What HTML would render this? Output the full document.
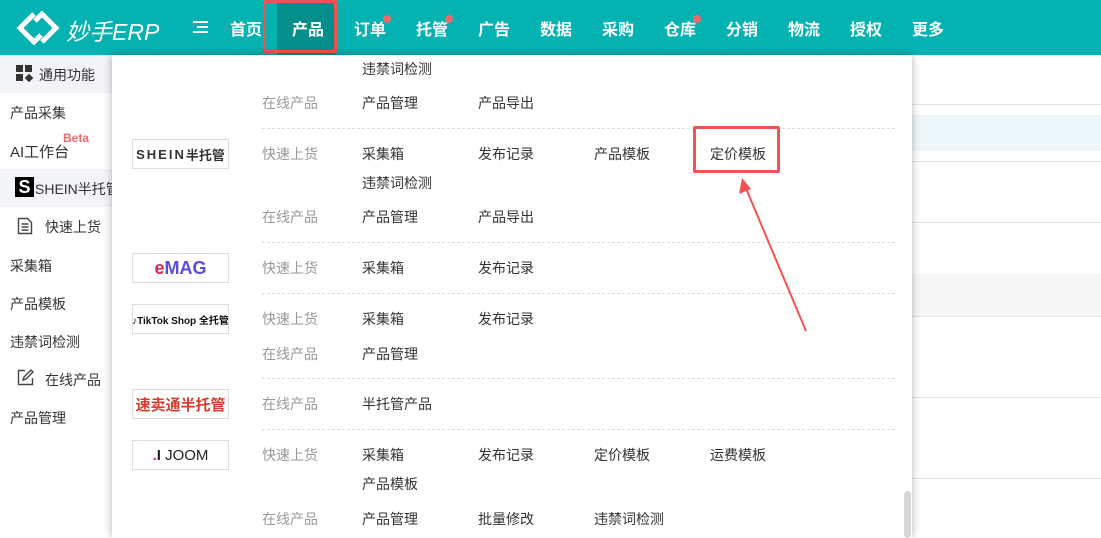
<!DOCTYPE html>
<html><head><meta charset="utf-8"><style>
*{margin:0;padding:0;box-sizing:border-box}
body{width:1101px;height:538px;overflow:hidden;background:#fff;font-family:"Liberation Sans","Noto Sans CJK SC",sans-serif;position:relative;font-size:14px;color:#333}
.hdr{position:absolute;left:0;top:0;width:1101px;height:55px;background:#04b2b1}
.nav{position:absolute;top:16px;color:#fff;font-size:16px;font-weight:bold}
.dot{position:absolute;width:8px;height:8px;border-radius:50%;background:#f0696b}
.a{position:absolute;white-space:nowrap}
.side{font-size:14px;color:#333}
.g{color:#999;font-size:14px}
.t{color:#333;font-size:14px}
.dl{position:absolute;left:262px;width:633px;border-top:1px dashed #dcdde4}
.logo{position:absolute;left:132px;width:97px;height:30px;border:1px solid #dcdde4;display:flex;align-items:center;justify-content:center;white-space:nowrap;overflow:hidden}
.rl{position:absolute;left:912px;width:189px;border-top:1px solid #e2e2ea}
</style></head><body>
<div class="hdr"></div>
<svg style="position:absolute;left:14px;top:9px" width="48" height="38" viewBox="0 0 48 38"><g fill="none" stroke="#fff" stroke-width="5" stroke-linejoin="miter"><path d="M20 5 L6 19 L20 33 L27 26"/><path d="M28 33 L42 19 L28 5 L21 12"/></g></svg>
<div class="a" style="left:66px;top:13px;color:#fff;font-size:23px;font-style:italic">妙手ERP</div>
<div class="a" style="left:193px;top:21px;width:15px"><div style="height:2px;background:#fff;margin-bottom:3px"></div><div style="height:2px;background:#fff;margin:0 0 3px 4px"></div><div style="height:2px;background:#fff"></div></div>
<div class="nav" style="left:230px">首页</div>
<div style="position:absolute;left:277px;top:0;width:59px;height:55px;background:#048f8d"></div>
<div style="position:absolute;left:263px;top:0;width:74px;height:53px;border:3px solid #f25252;border-radius:2px"></div>
<div class="nav" style="left:292px">产品</div>
<div class="nav" style="left:354px">订单</div><div class="dot" style="left:383px;top:15px"></div>
<div class="nav" style="left:416px">托管</div><div class="dot" style="left:445px;top:15px"></div>
<div class="nav" style="left:478px">广告</div>
<div class="nav" style="left:540px">数据</div>
<div class="nav" style="left:602px">采购</div>
<div class="nav" style="left:664px">仓库</div><div class="dot" style="left:693px;top:15px"></div>
<div class="nav" style="left:726px">分销</div>
<div class="nav" style="left:788px">物流</div>
<div class="nav" style="left:850px">授权</div>
<div class="nav" style="left:912px">更多</div>

<!-- sidebar -->
<div style="position:absolute;left:0;top:55px;width:112px;height:38px;background:#f3f4f7"></div>
<div style="position:absolute;left:16px;top:65px;width:17px;height:17px"><div style="position:absolute;left:0;top:0;width:7px;height:7px;background:#333"></div><div style="position:absolute;left:9px;top:0;width:7px;height:7px;background:#333"></div><div style="position:absolute;left:0;top:9px;width:7px;height:7px;background:#333"></div><div style="position:absolute;left:10px;top:10px;width:6px;height:6px;background:#333;transform:rotate(45deg)"></div></div>
<div class="a side" style="left:39px;top:65px">通用功能</div>
<div class="a side" style="left:10px;top:103px">产品采集</div>
<div class="a side" style="left:10px;top:141px;font-size:15px">AI工作台</div>
<div class="a" style="left:63px;top:131px;color:#f0696b;font-size:12px;font-weight:bold">Beta</div>
<div style="position:absolute;left:0;top:169px;width:112px;height:38px;background:#f3f4f7"></div>
<div class="a" style="left:15px;top:177px;width:19px;height:20px;background:#000;color:#fff;font-weight:bold;font-size:18px;text-align:center;line-height:20px">S</div>
<div class="a side" style="left:35px;top:179px">SHEIN半托管</div>
<svg style="position:absolute;left:17px;top:217px" width="16" height="18" viewBox="0 0 16 18"><path d="M1.5 1.5h9l4 4v11h-13z M4.5 7h7 M4.5 10h7 M4.5 13h7" fill="none" stroke="#444" stroke-width="1.4"/></svg>
<div class="a side" style="left:45px;top:217px">快速上货</div>
<div class="a side" style="left:10px;top:256px">采集箱</div>
<div class="a side" style="left:10px;top:294px">产品模板</div>
<div class="a side" style="left:10px;top:332px">违禁词检测</div>
<svg style="position:absolute;left:17px;top:369px" width="17" height="17" viewBox="0 0 17 17"><path d="M8 1.5H1.5v14h14V9 M6 11l1-3 7-7 2 2-7 7z" fill="none" stroke="#444" stroke-width="1.4"/></svg>
<div class="a side" style="left:45px;top:370px">在线产品</div>
<div class="a side" style="left:10px;top:408px">产品管理</div>

<!-- right area -->
<div class="rl" style="top:104px"></div>
<div style="position:absolute;left:912px;top:115px;width:189px;height:36px;background:#eef7fa"></div>
<div class="rl" style="top:161px"></div>
<div class="rl" style="top:222px"></div>
<div style="position:absolute;left:912px;top:273px;width:189px;height:43px;background:#f7f7f7"></div>
<div class="rl" style="top:316px"></div>
<div class="rl" style="top:397px"></div>
<div class="rl" style="top:478px"></div>

<!-- dropdown -->
<div style="position:absolute;left:112px;top:55px;width:800px;height:483px;background:#fff;box-shadow:0 0 8px rgba(0,0,0,.3)"></div>
<div style="position:absolute;left:904px;top:491px;width:7px;height:47px;background:#d6d6d6;border-radius:4px"></div>
<div class="a t" style="left:362px;top:59px">违禁词检测</div>
<div class="a g" style="left:262px;top:93px">在线产品</div>
<div class="a t" style="left:362px;top:93px">产品管理</div><div class="a t" style="left:478px;top:93px">产品导出</div>
<div class="dl" style="top:128px"></div>
<div class="logo" style="top:139px;font-weight:bold;font-size:13px;letter-spacing:2px">SHEIN<span style="letter-spacing:0">半托管</span></div>
<div class="a g" style="left:262px;top:144px">快速上货</div>
<div class="a t" style="left:362px;top:144px">采集箱</div><div class="a t" style="left:478px;top:144px">发布记录</div><div class="a t" style="left:594px;top:144px">产品模板</div><div class="a t" style="left:710px;top:144px">定价模板</div>
<div class="a t" style="left:362px;top:173px">违禁词检测</div>
<div class="a g" style="left:262px;top:207px">在线产品</div>
<div class="a t" style="left:362px;top:207px">产品管理</div><div class="a t" style="left:478px;top:207px">产品导出</div>
<div class="dl" style="top:242px"></div>
<div class="logo" style="top:253px;font-weight:bold;font-size:18px;color:#e8234a">e<span style="color:#5b4be0">MAG</span></div>
<div class="a g" style="left:262px;top:258px">快速上货</div>
<div class="a t" style="left:362px;top:258px">采集箱</div><div class="a t" style="left:478px;top:258px">发布记录</div>
<div class="dl" style="top:293px"></div>
<div class="logo" style="top:304px;font-size:10px;font-weight:bold;color:#111">♪TikTok Shop 全托管</div>
<div class="a g" style="left:262px;top:309px">快速上货</div>
<div class="a t" style="left:362px;top:309px">采集箱</div><div class="a t" style="left:478px;top:309px">发布记录</div>
<div class="a g" style="left:262px;top:344px">在线产品</div>
<div class="a t" style="left:362px;top:344px">产品管理</div>
<div class="dl" style="top:378px"></div>
<div class="logo" style="top:389px;font-weight:bold;font-size:15px;color:#d83a2b">速卖通半托管</div>
<div class="a g" style="left:262px;top:394px">在线产品</div>
<div class="a t" style="left:362px;top:394px">半托管产品</div>
<div class="dl" style="top:429px"></div>
<div class="logo" style="top:440px;font-size:15px;color:#222"><span style="color:#e8234a;font-weight:bold">.</span><b>I</b>&nbsp;JOOM</div>
<div class="a g" style="left:262px;top:445px">快速上货</div>
<div class="a t" style="left:362px;top:445px">采集箱</div><div class="a t" style="left:478px;top:445px">发布记录</div><div class="a t" style="left:594px;top:445px">定价模板</div><div class="a t" style="left:710px;top:445px">运费模板</div>
<div class="a t" style="left:362px;top:474px">产品模板</div>
<div class="a g" style="left:262px;top:509px">在线产品</div>
<div class="a t" style="left:362px;top:509px">产品管理</div><div class="a t" style="left:478px;top:509px">批量修改</div><div class="a t" style="left:594px;top:509px">违禁词检测</div>

<div style="position:absolute;left:693px;top:126px;width:87px;height:47px;border:3px solid #f25252;border-radius:2px"></div>
<svg style="position:absolute;left:0;top:0" width="1101" height="538"><line x1="806" y1="331" x2="745" y2="186" stroke="#f25252" stroke-width="2"/><path d="M742 178 L739 194 L751 189 Z" fill="#f25252"/></svg>
</body></html>
